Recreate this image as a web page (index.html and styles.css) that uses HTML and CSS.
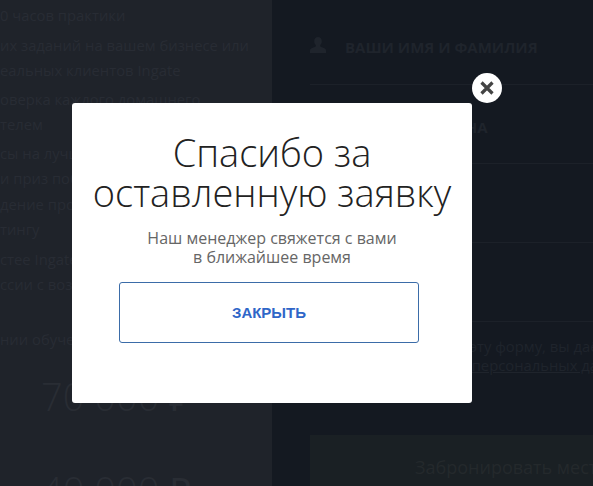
FILE: index.html
```html
<!DOCTYPE html>
<html lang="ru">
<head>
    <meta charset="UTF-8" />
    <title>Спасибо за оставленную заявку</title>
    <link rel="stylesheet" href="styles.css">
</head>
<body>

    <div class="page">
        <div class="info">
            <div class="group first">
                <p>0 часов практики</p>
            </div>
            <div class="group">
                <p>их заданий на вашем бизнесе или</p>
                <p>еальных клиентов Ingate</p>
            </div>
            <div class="group tight">
                <p>оверка каждого домашнего</p>
                <p>телем</p>
            </div>
            <div class="group tight">
                <p>сы на лучшую работу</p>
                <p>и приз победителю</p>
                <p>дение программы по</p>
                <p>тингу</p>
            </div>
            <div class="group">
                <p>стее Ingate</p>
                <p>ссии с возможностью</p>
            </div>
            <div class="group terms">
                <p>нии обучения</p>
            </div>
            <div class="price">70 000 ₽</div>
            <div class="price second">40 000 ₽</div>
        </div>

        <div class="form">
            <div class="field">
                <svg class="field-icon" viewBox="0 0 16 16">
                    <path d="M8 0c2.300 0 3.800 1.800 3.800 4.200 0 1.600-.7 3-1.600 3.800v1.400l4.200 1.900c1 .5 1.600 1.200 1.600 2.200V16H0v-2.500c0-1 .6-1.700 1.600-2.200l4.200-1.900V8c-.9-.8-1.600-2.200-1.600-3.800C4.200 1.800 5.700 0 8 0z"/>
                </svg>
                <span>ВАШИ ИМЯ И ФАМИЛИЯ</span>
            </div>
            <div class="field">
                <span class="field-phone">НОМЕР ТЕЛЕФОНА</span>
            </div>
            <div class="field"></div>
            <div class="field"></div>
            <p class="agree">Заполняя и отправляя эту форму, вы даёте<br>согласие на обработку <u>персональных данных</u></p>
            <div class="book">Забронировать место</div>
        </div>
    </div>

    <div class="overlay">
        <div class="modal">
            <button class="modal-close" aria-label="Закрыть">
                <svg viewBox="0 0 16 16">
                    <path d="M2.500 2.500l11 11M13.500 2.500l-11 11"/>
                </svg>
            </button>
            <h1>Спасибо за<br>оставленную заявку</h1>
            <p class="modal-text">Наш менеджер свяжется с вами<br>в ближайшее время</p>
            <a class="modal-btn">ЗАКРЫТЬ</a>
        </div>
    </div>

</body>
</html>
```

FILE: styles.css
```css
* {
    box-sizing: border-box;
    margin: 0;
    padding: 0;
}

html, body {
    height: 100%;
    overflow: hidden;
}

body {
    background: #141921;
    font-family: "Open Sans", sans-serif;
}

.page {
    display: flex;
    height: 486px;
    overflow: hidden;
}

/* left column, cut by the window edge */
.info {
    flex: 0 0 272px;
    background: #1f232a;
    color: #282c34;
    font-size: 14.8px;
    line-height: 25.5px;
    white-space: nowrap;
    overflow: hidden;
}

.group {
    margin-top: 4px;
}

.group.first {
    margin-top: 3px;
}

.group.tight {
    margin-top: 3px;
}

.group.terms {
    margin-top: 29px;
}

.price {
    margin: 19px 0 0 41px;
    font-size: 38px;
    font-weight: 300;
    line-height: 50px;
    color: #292d34;
}

.price.second {
    margin-top: 44px;
}

/* right column with the form */
.form {
    flex: 1;
    padding-left: 38px;
    white-space: nowrap;
    overflow: hidden;
    color: #1f242c;
}

.field {
    display: flex;
    align-items: center;
    gap: 19px;
    height: 79px;
    border-bottom: 1px solid #1c2129;
    font-size: 15px;
    font-weight: 700;
}

.field:first-child {
    height: 85px;
    padding-top: 6px;
}

.field:first-child span {
    margin-top: 4px;
}

.field-icon {
    width: 16px;
    height: 16px;
    fill: #1f242c;
}

.field-phone {
    margin-left: 35px;
    margin-top: 6px;
}

.agree {
    margin: 15px 0 0 -6px;
    font-size: 14.8px;
    line-height: 19px;
}

.book {
    height: 60px;
    margin-top: 60px;
    padding: 20px 0 0 105px;
    background: #1a2024;
    font-size: 18px;
    color: #24292c;
}

.overlay {
    position: fixed;
    top: 0;
    left: 0;
    width: 100%;
    height: 100%;
}

.modal {
    position: absolute;
    top: 103px;
    left: 72px;
    width: 400px;
    height: 300px;
    padding-top: 29px;
    background: #fff;
    border-radius: 3px;
    text-align: center;
}

.modal-close {
    position: absolute;
    top: -30px;
    right: -30px;
    display: flex;
    align-items: center;
    justify-content: center;
    width: 30px;
    height: 30px;
    background: #fff;
    border: none;
    border-radius: 50%;
}

.modal-close svg {
    width: 16px;
    height: 16px;
    fill: none;
    stroke: #444;
    stroke-width: 3.2;
}

.modal h1 {
    font-size: 38px;
    font-weight: 300;
    line-height: 40px;
    color: #222;
}

.modal-text {
    margin-top: 17px;
    font-size: 16px;
    line-height: 19px;
    color: #666;
}

.modal-btn {
    display: flex;
    align-items: center;
    justify-content: center;
    width: 300px;
    height: 61px;
    margin: 15px 0 0 47px;
    border: 1px solid #3b6ca8;
    border-radius: 3px;
    font-family: "Liberation Sans", sans-serif;
    font-size: 15px;
    font-weight: 700;
    color: #2f66c8;
}
```
